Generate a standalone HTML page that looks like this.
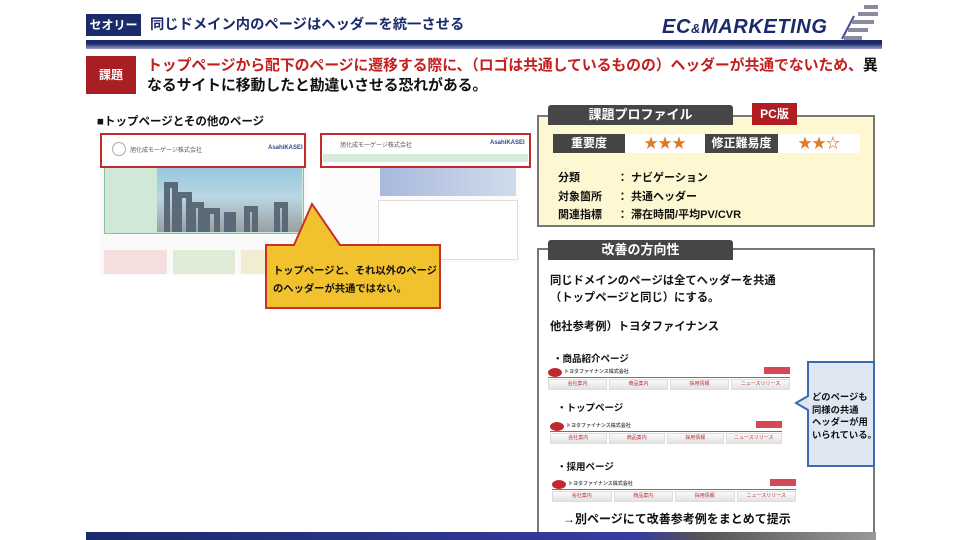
<!DOCTYPE html>
<html><head><meta charset="utf-8"><style>
*{margin:0;padding:0;box-sizing:border-box}
body{width:960px;height:540px;background:#fff;position:relative;overflow:hidden;font-family:"Liberation Sans","Noto Sans CJK JP",sans-serif;font-weight:bold}
.a{position:absolute;white-space:nowrap}
.tb{position:absolute;background:#464646;color:#fff;font-size:13px;text-align:center;border-radius:3px 3px 0 0}
.th{position:absolute;height:26px}
.th .lg{position:absolute;left:0;top:2px;width:14px;height:9px;border-radius:50%;background:#c0282d}
.th .nm{position:absolute;left:16px;top:2px;font-size:5px;color:#555}
.th .rd{position:absolute;right:0;top:1px;width:26px;height:7px;background:#d34a56}
.th .ln{position:absolute;left:0;right:0;top:11px;height:1px;background:#d34a56}
.th .nv{position:absolute;left:0;right:0;top:13px;height:11px;display:flex;gap:2px}
.th .nv div{flex:1;background:linear-gradient(#fafafa,#e2e2e2);border:1px solid #ddd;font-size:5px;color:#b33;text-align:center;line-height:9px;font-weight:normal}
</style></head><body>
<div class="a" style="left:86px;top:14px;width:55px;height:22px;background:#1b2a6b;color:#fff;font-size:12px;text-align:center;line-height:22px">セオリー</div>
<div class="a" style="left:150px;top:15px;font-size:14.3px;color:#1b2a6b;line-height:20px">同じドメイン内のページはヘッダーを統一させる</div>
<div class="a" style="left:662px;top:16px;font-size:20px;font-style:italic;color:#1b2a6b;letter-spacing:0.6px;font-family:'Liberation Sans',sans-serif">EC<span style="font-size:13px">&amp;</span>MARKETING</div>
<svg class="a" style="left:838px;top:2px" width="46" height="40"><path d="M4 37 L16 14" stroke="#4a4aa0" stroke-width="2" fill="none"/><path d="M6 36h18M10 28h20M14 20h22M20 12h20M26 5h14" stroke="#8a8aa0" stroke-width="4"/></svg>
<div class="a" style="left:86px;top:40px;width:796px;height:9px;background:linear-gradient(#1b2a6b 0,#1b2a6b 40%,#9a9cc8 100%)"></div>
<div class="a" style="left:86px;top:56px;width:50px;height:38px;background:#a81e22;color:#fff;font-size:12px;text-align:center;line-height:38px">課題</div>
<div class="a" style="left:147px;top:56px;font-size:14.9px;line-height:20px;color:#c41e1e;letter-spacing:-0.1px">トップページから配下のページに遷移する際に、（ロゴは共通しているものの）ヘッダーが共通でないため、<span style="color:#111">異<br>なるサイトに移動したと勘違いさせる恐れがある。</span></div>
<div class="a" style="left:97px;top:113px;font-size:11.5px;color:#111">■トップページとその他のページ</div>
<!-- left screenshot -->
<div class="a" style="left:100px;top:135px;width:208px;height:140px;background:#fafafa"></div>
<div class="a" style="left:104px;top:158px;width:200px;height:76px;background:#cfe8d8;border:1px solid #8cbf9e"></div>
<div class="a" style="left:157px;top:162px;width:145px;height:70px;background:linear-gradient(#8ec4dc,#bad6e4 50%,#9aa0a0)"></div>
<svg class="a" style="left:157px;top:175px" width="145" height="57"><path d="M10 57V10h8v47M22 57V20h10v37M36 57V30h8v27M50 57V36h10v21M70 57V40h6v17M90 57V34h8v23M120 57V30h8v27" stroke="#5b6a78" stroke-width="6" fill="none"/></svg>
<div class="a" style="left:104px;top:236px;width:200px;height:38px;display:flex;gap:6px;padding-top:14px"><div style="flex:1;background:#f4dede"></div><div style="flex:1;background:#e0ecd6"></div><div style="flex:1;background:#f2ecd0"></div></div>
<div class="a" style="left:100px;top:133px;width:206px;height:35px;border:2px solid #c52a2a;background:#fff"></div>
<div class="a" style="left:112px;top:142px;width:14px;height:14px;border-radius:50%;border:1px solid #aaa"></div>
<div class="a" style="left:130px;top:145px;font-size:6px;color:#555;font-weight:normal">旭化成モーゲージ株式会社</div>
<div class="a" style="left:268px;top:145px;font-size:6px;color:#2b4a8c">AsahiKASEI</div>
<!-- right screenshot -->
<div class="a" style="left:320px;top:135px;width:200px;height:128px;background:#fbfbfb"></div>
<div class="a" style="left:380px;top:168px;width:136px;height:28px;background:linear-gradient(90deg,#a8b8dc,#d0dcec)"></div>
<div class="a" style="left:378px;top:200px;width:140px;height:60px;border:1px solid #ddd;background:#fff"></div>
<div class="a" style="left:320px;top:133px;width:211px;height:35px;border:2px solid #c52a2a;background:#fff"></div>
<div class="a" style="left:323px;top:154px;width:205px;height:8px;background:#d8ecdc"></div>
<div class="a" style="left:340px;top:140px;font-size:6px;color:#555;font-weight:normal">旭化成モーゲージ株式会社</div>
<div class="a" style="left:490px;top:140px;font-size:6px;color:#2b4a8c">AsahiKASEI</div>
<!-- callout -->
<svg class="a" style="left:262px;top:200px" width="182" height="112"><path d="M4 45H32L50 4L78 45H178V108H4Z" fill="#f2c12e" stroke="#c8302c" stroke-width="2"/></svg>
<div class="a" style="left:273px;top:263px;font-size:10.3px;line-height:18px;color:#111">トップページと、それ以外のページ<br>のヘッダーが共通ではない。</div>
<!-- profile -->
<div class="a" style="left:537px;top:115px;width:338px;height:112px;background:#fdf8d2;border:2px solid #777"></div>
<div class="tb" style="left:548px;top:105px;width:185px;height:20px;line-height:20px">課題プロファイル</div>
<div class="a" style="left:752px;top:103px;width:45px;height:22px;background:#b01e22;color:#fff;font-size:12px;text-align:center;line-height:22px">PC版</div>
<div class="a" style="left:553px;top:134px;width:72px;height:19px;background:#454545;color:#fff;font-size:12px;text-align:center;line-height:19px">重要度</div>
<div class="a" style="left:625px;top:134px;width:80px;height:19px;background:#fff;color:#e07a20;font-size:14px;text-align:center;line-height:19px">★★★</div>
<div class="a" style="left:705px;top:134px;width:73px;height:19px;background:#454545;color:#fff;font-size:12px;text-align:center;line-height:19px">修正難易度</div>
<div class="a" style="left:778px;top:134px;width:82px;height:19px;background:#fff;color:#e07a20;font-size:14px;text-align:center;line-height:19px">★★☆</div>
<div class="a" style="left:558px;top:169px;font-size:11px;line-height:18.5px;color:#111">分類<br>対象箇所<br>関連指標</div>
<div class="a" style="left:617px;top:169px;font-size:11px;line-height:18.5px;color:#111">：&nbsp;ナビゲーション<br>：&nbsp;共通ヘッダー<br>：&nbsp;滞在時間/平均PV/CVR</div>
<!-- improvement -->
<div class="a" style="left:537px;top:248px;width:338px;height:286px;background:#fff;border:2px solid #777"></div>
<div class="tb" style="left:548px;top:240px;width:185px;height:20px;line-height:20px">改善の方向性</div>
<div class="a" style="left:550px;top:273px;font-size:11.3px;line-height:17px;color:#111">同じドメインのページは全てヘッダーを共通<br>（トップページと同じ）にする。</div>
<div class="a" style="left:550px;top:318px;font-size:11.3px;color:#111">他社参考例）トヨタファイナンス</div>
<div class="a" style="left:553px;top:351px;font-size:9.5px;color:#111">・商品紹介ページ</div>
<div class="a" style="left:557px;top:400px;font-size:9.5px;color:#111">・トップページ</div>
<div class="a" style="left:557px;top:459px;font-size:9.5px;color:#111">・採用ページ</div>
<div class="th" style="left:548px;top:366px;width:242px"><div class="lg"></div><div class="nm">トヨタファイナンス株式会社</div><div class="rd"></div><div class="ln"></div><div class="nv"><div>会社案内</div><div>商品案内</div><div>採用情報</div><div>ニュースリリース</div></div></div>
<div class="th" style="left:550px;top:420px;width:232px"><div class="lg"></div><div class="nm">トヨタファイナンス株式会社</div><div class="rd"></div><div class="ln"></div><div class="nv"><div>会社案内</div><div>商品案内</div><div>採用情報</div><div>ニュースリリース</div></div></div>
<div class="th" style="left:552px;top:478px;width:244px"><div class="lg"></div><div class="nm">トヨタファイナンス株式会社</div><div class="rd"></div><div class="ln"></div><div class="nv"><div>会社案内</div><div>商品案内</div><div>採用情報</div><div>ニュースリリース</div></div></div>
<svg class="a" style="left:794px;top:360px" width="82" height="108"><path d="M14 2H80V106H14V50L2 43L14 36Z" fill="#dfe8f2" stroke="#3a6bb0" stroke-width="2"/></svg>
<div class="a" style="left:812px;top:391px;font-size:9.3px;line-height:12.5px;color:#111">どのページも<br>同様の共通<br>ヘッダーが用<br>いられている。</div>
<div class="a" style="left:563px;top:510px;font-size:12px;color:#111">→別ページにて改善参考例をまとめて提示</div>
<!-- bottom -->
<div class="a" style="left:86px;top:532px;width:790px;height:8px;background:linear-gradient(90deg,#1b2a6b,#3a3aa0 70%,#555 78%,#999)"></div>
</body></html>
